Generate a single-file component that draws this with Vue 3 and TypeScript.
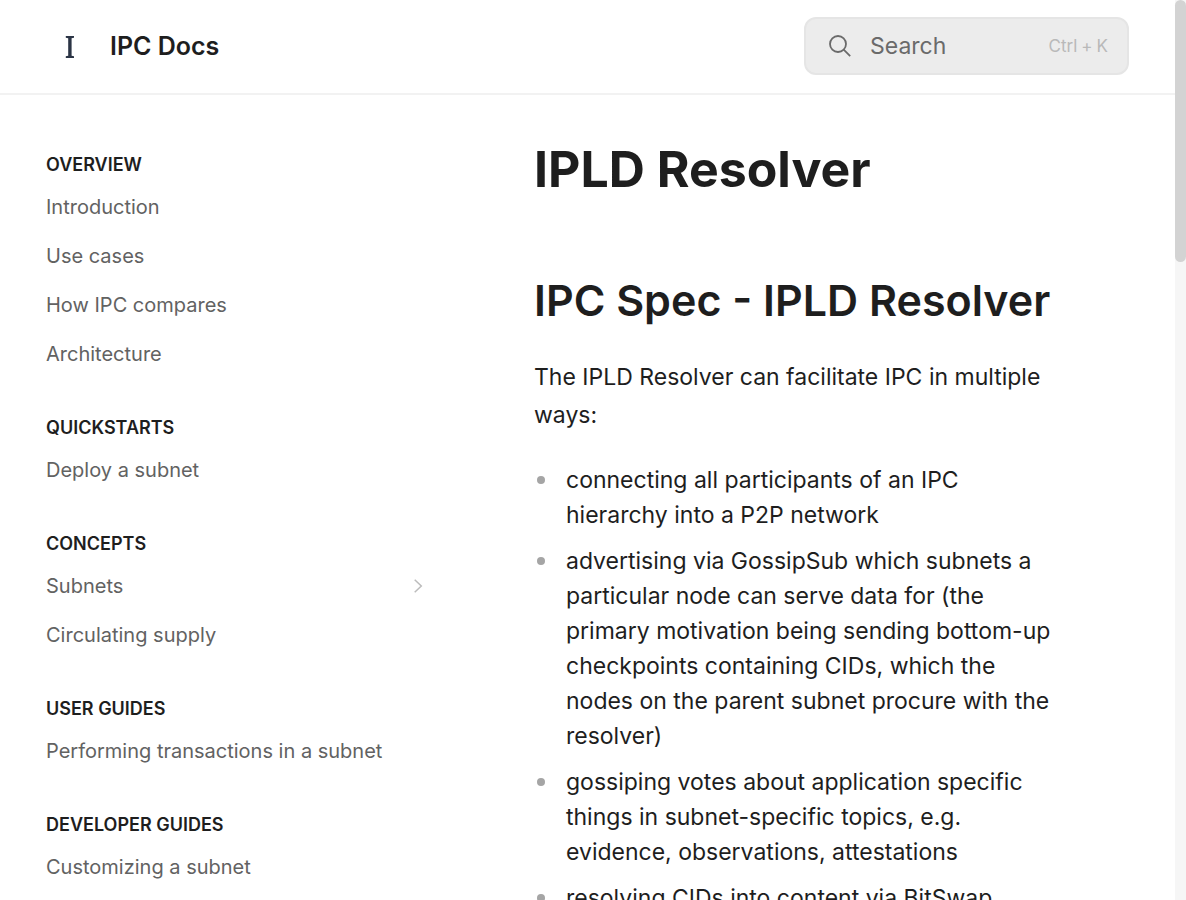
<script setup lang="ts">
interface NavItem {
  label: string
  expandable?: boolean
}
interface NavGroup {
  title: string
  items: NavItem[]
}

const groups: NavGroup[] = [
  {
    title: 'Overview',
    items: [
      { label: 'Introduction' },
      { label: 'Use cases' },
      { label: 'How IPC compares' },
      { label: 'Architecture' },
    ],
  },
  { title: 'Quickstarts', items: [{ label: 'Deploy a subnet' }] },
  {
    title: 'Concepts',
    items: [{ label: 'Subnets', expandable: true }, { label: 'Circulating supply' }],
  },
  { title: 'User guides', items: [{ label: 'Performing transactions in a subnet' }] },
  { title: 'Developer guides', items: [{ label: 'Customizing a subnet' }] },
]

const points: string[] = [
  'connecting all participants of an IPC hierarchy into a P2P network',
  'advertising via GossipSub which subnets a particular node can serve data for (the primary motivation being sending bottom-up checkpoints containing CIDs, which the nodes on the parent subnet procure with the resolver)',
  'gossiping votes about application specific things in subnet-specific topics, e.g. evidence, observations, attestations',
  'resolving CIDs into content via BitSwap',
]
</script>

<template>
  <div class="shell">
    <div class="page">
      <header class="topbar">
        <a class="brand" href="#">
          <svg class="logo" viewBox="0 0 46 46" aria-hidden="true">
            <path
              d="M19.800 13h8.200v1.800l-2.400.5v17.400l2.400.5V35h-8.200v-1.800l2.400-.5V15.300l-2.400-.5z"
              fill="#2b3445"
            />
          </svg>
          <span class="brand-name">IPC Docs</span>
        </a>
        <button class="search" type="button">
          <svg class="search-icon" viewBox="0 0 24 24" aria-hidden="true">
            <circle cx="10" cy="10" r="8" />
            <path d="M15.700 15.700l6.500 6.500" />
          </svg>
          <span class="search-label">Search</span>
          <span class="shortcut"><span>Ctrl</span><span>+</span><span>K</span></span>
        </button>
      </header>

      <div class="body">
        <nav class="sidebar" aria-label="Documentation">
          <section v-for="group in groups" :key="group.title" class="group">
            <h2 class="group-title">{{ group.title }}</h2>
            <ul class="links">
              <li v-for="item in group.items" :key="item.label">
                <a class="link" href="#">
                  <span>{{ item.label }}</span>
                  <svg v-if="item.expandable" class="chevron" viewBox="0 0 16 16" aria-hidden="true">
                    <path d="M4.700 1.800l6.600 6.200-6.600 6.200" />
                  </svg>
                </a>
              </li>
            </ul>
          </section>
        </nav>

        <main class="content">
          <h1 class="title">IPLD Resolver</h1>
          <h2 class="subtitle">IPC Spec - IPLD Resolver</h2>
          <p class="lead">The IPLD Resolver can facilitate IPC in multiple ways:</p>
          <ul class="points">
            <li v-for="point in points" :key="point" class="point">{{ point }}</li>
          </ul>
        </main>
      </div>
    </div>
    <div class="track" aria-hidden="true"><div class="thumb"></div></div>
  </div>
</template>

<style>
body {
  margin: 0;
  background: #fff;
}
</style>

<style scoped>
.shell {
  display: flex;
  height: 100vh;
  overflow: hidden;
  background: #fff;
  color: #1e1e1e;
  font-family: Inter, 'Liberation Sans', sans-serif;
}
.page {
  flex: 1;
  min-width: 0;
  overflow: hidden;
}
.topbar {
  display: flex;
  align-items: center;
  justify-content: space-between;
  box-sizing: border-box;
  height: 95px;
  padding: 0 46px 1px;
  border-bottom: 2px solid #f2f2f2;
}
.brand {
  display: flex;
  align-items: center;
  gap: 18px;
  color: inherit;
  text-decoration: none;
}
.logo {
  width: 46px;
  height: 46px;
}
.brand-name {
  font-size: 25px;
  line-height: 32px;
  font-weight: 600;
}
.search {
  display: flex;
  align-items: center;
  box-sizing: border-box;
  width: 325px;
  height: 58px;
  padding: 0 19px 0 22px;
  border: 2px solid #e5e5e5;
  border-radius: 12px;
  background: #ececec;
  font-family: inherit;
}
.search-icon {
  width: 24px;
  height: 24px;
  margin-right: 18px;
  fill: none;
  stroke: #6a6a6a;
  stroke-width: 1.8;
}
.search-label {
  flex: 1;
  text-align: left;
  font-size: 23px;
  color: #6a6a6a;
}
.shortcut {
  display: flex;
  gap: 4px;
  font-size: 17px;
  color: #b9b9b9;
}
.body {
  display: flex;
}
.sidebar {
  flex: none;
  width: 380px;
  padding: 57px 0 0 46px;
}
.group {
  margin-bottom: 37px;
}
.group-title {
  margin: 0 0 5px;
  font-size: 18px;
  line-height: 25px;
  font-weight: 600;
  text-transform: uppercase;
}
.links,
.points {
  margin: 0;
  padding: 0;
  list-style: none;
}
.link {
  display: flex;
  align-items: center;
  justify-content: space-between;
  height: 49px;
  font-size: 20px;
  color: #626262;
  text-decoration: none;
}
.chevron {
  width: 16px;
  height: 16px;
  fill: none;
  stroke: #bcbcbc;
  stroke-width: 1.5;
}
.content {
  flex: 1;
  min-width: 0;
  padding: 42px 111px 0 108px;
}
.title {
  margin: 0 0 69px;
  font-size: 50px;
  line-height: 64px;
  font-weight: 700;
}
.subtitle {
  margin: 0 0 28px;
  font-size: 43px;
  line-height: 60px;
  font-weight: 600;
}
.lead {
  margin: 0 0 29px;
  font-size: 23px;
  line-height: 38px;
}
.point {
  position: relative;
  margin-bottom: 11px;
  padding-left: 32px;
  font-size: 23px;
  line-height: 35px;
}
.point::before {
  content: '';
  position: absolute;
  top: 13px;
  left: 3px;
  width: 8px;
  height: 8px;
  border-radius: 50%;
  background: #a5a5a5;
}
.track {
  flex: none;
  width: 11px;
  background: #f6f6f6;
}
.thumb {
  height: 262px;
  border-radius: 6px;
  background: #d3d3d3;
}
</style>
